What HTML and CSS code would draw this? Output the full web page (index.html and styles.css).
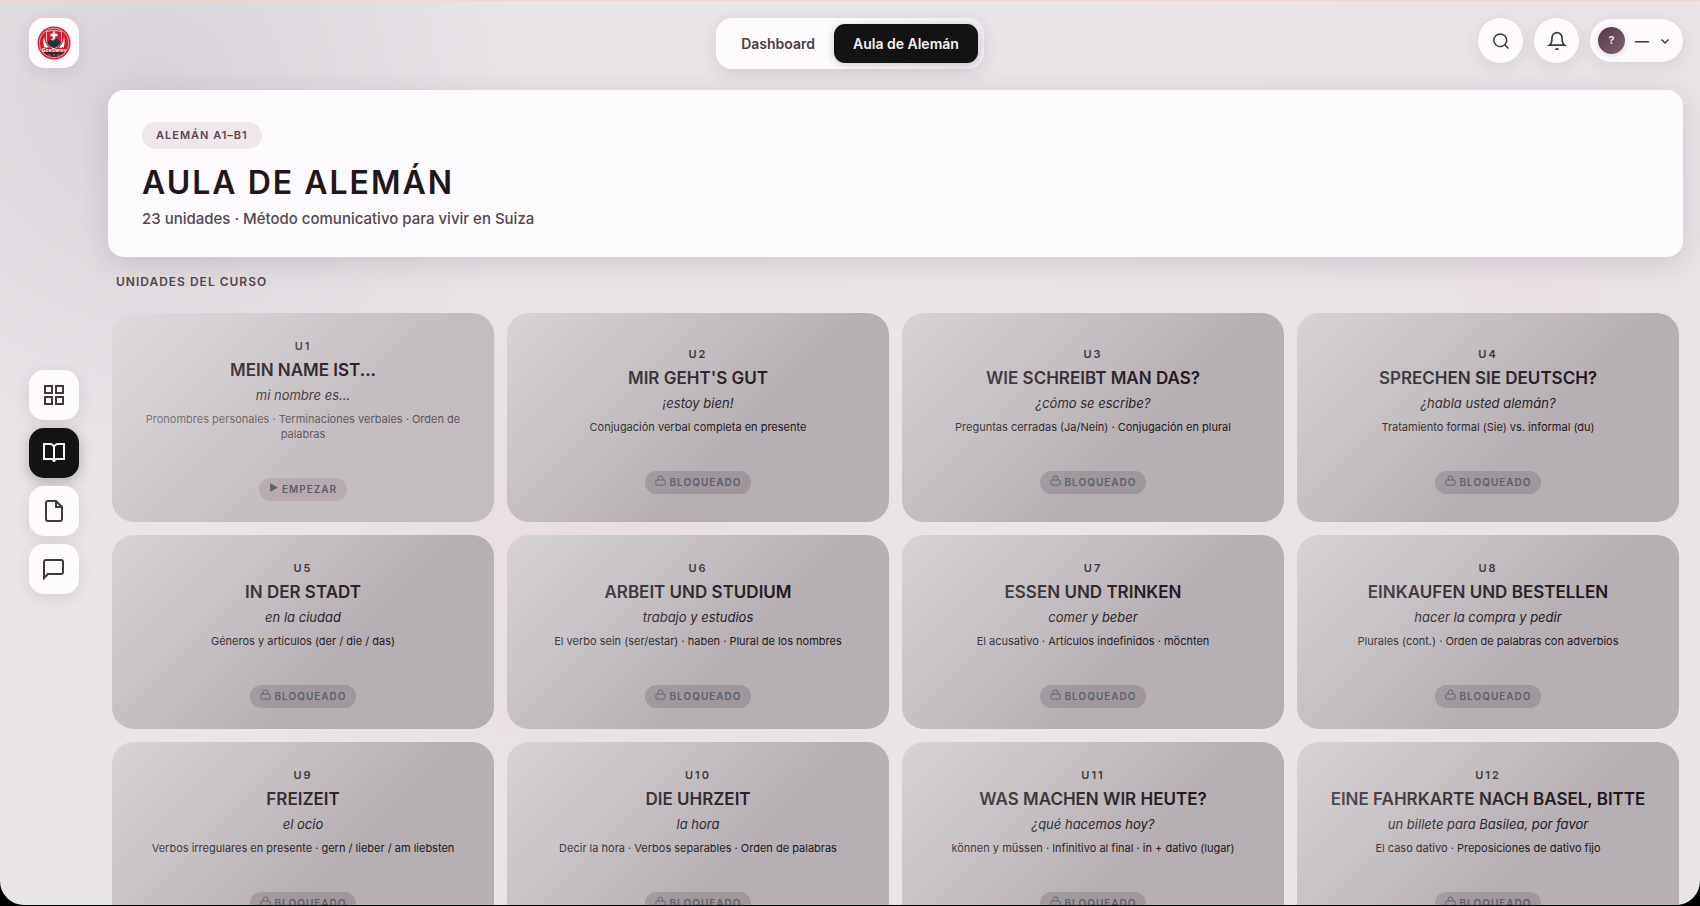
FILE: index.html
```html
<!DOCTYPE html>
<html lang="es">
<head>
    <meta charset="UTF-8">
    <meta name="viewport" content="width=device-width, initial-scale=1.0">
    <title>Aula de Alemán</title>
    <link rel="stylesheet" href="styles.css">
</head>
<body>
    <svg class="sprite" aria-hidden="true">
        <symbol id="lock" viewBox="0 0 24 24">
            <rect x="2" y="11" width="20" height="11" rx="2"/>
            <path d="M7 11V7a5 5 0 0 1 10 0v4"/>
        </symbol>
        <symbol id="play" viewBox="0 0 24 24">
            <path d="M4 2l18 10L4 22z"/>
        </symbol>
    </svg>

    <div class="app">
        <header class="topbar">
            <a class="tile logo" href="#" aria-label="Inicio">
                <svg width="34" height="34" viewBox="0 0 34 34">
                    <circle cx="17" cy="17" r="16.5" fill="#d5182a"/>
                    <circle cx="17" cy="17" r="14.8" fill="none" stroke="#f6c9cd" stroke-width=".8"/>
                    <path d="M5.6 24.5a13.5 13.5 0 0 0 22.8 0z" fill="#3a2530"/>
                    <path d="M7 11c1 5 2 8 5 10.500H7.500C6 18 6 14 7 11zM27 11c-1 5-2 8-5 10.500h4.500C28 18 28 14 27 11z" fill="#fff"/>
                    <path d="M9.500 5.500Q17 3 24.500 5.500V14q0 6-7.500 8.500Q9.500 20 9.500 14z" fill="#d5182a" stroke="#f8dfe1" stroke-width=".8"/>
                    <path d="M15.800 5.500h2.400v2.300h2.300v2.400h-2.300v2.300h-2.400v-2.300h-2.300V7.800h2.300z" fill="#fff"/>
                    <path d="M10 16l4-3 3-1.500 3 1.500 4 3q-1 4-7 6-6-2-7-6z" fill="#263540"/>
                    <path d="M13 14l4-2.500 2 1.300-2 .7-1 1.500-1-1.200z" fill="#dfe5e8"/>
                    <text x="17" y="26" class="logo-text">GoeSwiss</text>
                    <path d="M11 29h3M16 29h2M20 29h3" stroke="#a98d94" stroke-width=".8"/>
                </svg>
            </a>

            <nav class="tabs">
                <a href="#">Dashboard</a>
                <a class="active" href="#">Aula de Alemán</a>
            </nav>

            <div class="actions">
                <button class="round" aria-label="Buscar">
                    <svg class="icon" width="18" height="18" viewBox="0 0 24 24"><circle cx="11" cy="11" r="8.500"/><path d="M17.500 17.500L22 22"/></svg>
                </button>
                <button class="round" aria-label="Notificaciones">
                    <svg class="icon" width="20" height="20" viewBox="0 0 24 24"><path d="M18 8A6 6 0 0 0 6 8c0 7-3 9-3 9h18s-3-2-3-9"/><path d="M13.700 21a2 2 0 0 1-3.400 0"/></svg>
                </button>
                <button class="user" aria-label="Cuenta">
                    <span class="avatar">?</span>
                    <span class="user-name">—</span>
                    <svg class="icon" width="12" height="12" viewBox="0 0 24 24"><path d="M5 9l7 7 7-7"/></svg>
                </button>
            </div>
        </header>

        <aside class="sidebar">
            <a class="tile" href="#" aria-label="Dashboard">
                <svg class="icon" width="24" height="24" viewBox="0 0 24 24"><rect x="3" y="3" width="7" height="7"/><rect x="14" y="3" width="7" height="7"/><rect x="3" y="14" width="7" height="7"/><rect x="14" y="14" width="7" height="7"/></svg>
            </a>
            <a class="tile active" href="#" aria-label="Aula">
                <svg class="icon" width="24" height="24" viewBox="0 0 24 24"><path d="M2 3h6a4 4 0 0 1 4 4v14a3 3 0 0 0-3-3H2z"/><path d="M22 3h-6a4 4 0 0 0-4 4v14a3 3 0 0 1 3-3h7z"/></svg>
            </a>
            <a class="tile" href="#" aria-label="Documentos">
                <svg class="icon" width="24" height="24" viewBox="0 0 24 24"><path d="M14 2H6a2 2 0 0 0-2 2v16a2 2 0 0 0 2 2h12a2 2 0 0 0 2-2V8z"/><path d="M14 2v6h6"/></svg>
            </a>
            <a class="tile" href="#" aria-label="Mensajes">
                <svg class="icon" width="24" height="24" viewBox="0 0 24 24"><path d="M21 15a2 2 0 0 1-2 2H6l-4 4V5a2 2 0 0 1 2-2h15a2 2 0 0 1 2 2z"/></svg>
            </a>
        </aside>

        <main>
            <section class="hero">
                <span class="badge">ALEMÁN A1–B1</span>
                <h1>AULA DE ALEMÁN</h1>
                <p>23 unidades · Método comunicativo para vivir en Suiza</p>
            </section>

            <h2>UNIDADES DEL CURSO</h2>

            <div class="units">
                <article class="unit open">
                    <span class="num">U1</span>
                    <h3>MEIN NAME IST...</h3>
                    <em>mi nombre es...</em>
                    <p>Pronombres personales · Terminaciones verbales · Orden de palabras</p>
                    <button><svg><use href="#play"/></svg>EMPEZAR</button>
                </article>
                <article class="unit">
                    <span class="num">U2</span>
                    <h3>MIR GEHT'S GUT</h3>
                    <em>¡estoy bien!</em>
                    <p>Conjugación verbal completa en presente</p>
                    <button disabled><svg><use href="#lock"/></svg>BLOQUEADO</button>
                </article>
                <article class="unit">
                    <span class="num">U3</span>
                    <h3>WIE SCHREIBT MAN DAS?</h3>
                    <em>¿cómo se escribe?</em>
                    <p>Preguntas cerradas (Ja/Nein) · Conjugación en plural</p>
                    <button disabled><svg><use href="#lock"/></svg>BLOQUEADO</button>
                </article>
                <article class="unit">
                    <span class="num">U4</span>
                    <h3>SPRECHEN SIE DEUTSCH?</h3>
                    <em>¿habla usted alemán?</em>
                    <p>Tratamiento formal (Sie) vs. informal (du)</p>
                    <button disabled><svg><use href="#lock"/></svg>BLOQUEADO</button>
                </article>
                <article class="unit">
                    <span class="num">U5</span>
                    <h3>IN DER STADT</h3>
                    <em>en la ciudad</em>
                    <p>Géneros y artículos (der / die / das)</p>
                    <button disabled><svg><use href="#lock"/></svg>BLOQUEADO</button>
                </article>
                <article class="unit">
                    <span class="num">U6</span>
                    <h3>ARBEIT UND STUDIUM</h3>
                    <em>trabajo y estudios</em>
                    <p>El verbo sein (ser/estar) · haben · Plural de los nombres</p>
                    <button disabled><svg><use href="#lock"/></svg>BLOQUEADO</button>
                </article>
                <article class="unit">
                    <span class="num">U7</span>
                    <h3>ESSEN UND TRINKEN</h3>
                    <em>comer y beber</em>
                    <p>El acusativo · Artículos indefinidos · möchten</p>
                    <button disabled><svg><use href="#lock"/></svg>BLOQUEADO</button>
                </article>
                <article class="unit">
                    <span class="num">U8</span>
                    <h3>EINKAUFEN UND BESTELLEN</h3>
                    <em>hacer la compra y pedir</em>
                    <p>Plurales (cont.) · Orden de palabras con adverbios</p>
                    <button disabled><svg><use href="#lock"/></svg>BLOQUEADO</button>
                </article>
                <article class="unit">
                    <span class="num">U9</span>
                    <h3>FREIZEIT</h3>
                    <em>el ocio</em>
                    <p>Verbos irregulares en presente · gern / lieber / am liebsten</p>
                    <button disabled><svg><use href="#lock"/></svg>BLOQUEADO</button>
                </article>
                <article class="unit">
                    <span class="num">U10</span>
                    <h3>DIE UHRZEIT</h3>
                    <em>la hora</em>
                    <p>Decir la hora · Verbos separables · Orden de palabras</p>
                    <button disabled><svg><use href="#lock"/></svg>BLOQUEADO</button>
                </article>
                <article class="unit">
                    <span class="num">U11</span>
                    <h3>WAS MACHEN WIR HEUTE?</h3>
                    <em>¿qué hacemos hoy?</em>
                    <p>können y müssen · Infinitivo al final · in + dativo (lugar)</p>
                    <button disabled><svg><use href="#lock"/></svg>BLOQUEADO</button>
                </article>
                <article class="unit">
                    <span class="num">U12</span>
                    <h3>EINE FAHRKARTE NACH BASEL, BITTE</h3>
                    <em>un billete para Basilea, por favor</em>
                    <p>El caso dativo · Preposiciones de dativo fijo</p>
                    <button disabled><svg><use href="#lock"/></svg>BLOQUEADO</button>
                </article>
            </div>
        </main>
    </div>
</body>
</html>
```

FILE: styles.css
```css
* {
    margin: 0;
    padding: 0;
    box-sizing: border-box;
}

body {
    height: 100vh;
    padding-bottom: 1px;
    overflow: hidden;
    background-color: #000;
    color: #20161c;
    font-family: Inter, sans-serif;
}

a {
    color: inherit;
    text-decoration: none;
}

button {
    border: none;
    font-family: inherit;
    color: inherit;
    cursor: pointer;
}

.sprite {
    display: none;
}

.app {
    height: 100%;
    overflow: hidden;
    display: grid;
    grid-template-columns: 50px minmax(0, 1fr);
    grid-template-rows: auto minmax(0, 1fr);
    column-gap: 29px;
    padding: 17px 17px 0 29px;
    border-top: 1px solid #efd6cf;
    border-radius: 0 0 24px 24px;
    background:
        radial-gradient(circle at 9% 10%, rgba(205, 202, 207, 0.65), transparent 22%),
        radial-gradient(circle at 35% 60%, rgba(232, 216, 222, 0.6), transparent 30%),
        radial-gradient(circle at 90% 30%, rgba(232, 216, 222, 0.3), transparent 30%),
        #e9e4e8;
}

/* top bar */
.topbar {
    grid-column: 1 / 3;
    display: grid;
    grid-template-columns: 1fr auto 1fr;
    align-items: start;
    margin-left: -12px;
    height: 72px;
}

.tile {
    width: 50px;
    height: 50px;
    display: flex;
    align-items: center;
    justify-content: center;
    border-radius: 15px;
    background-color: #fdfbfe;
    color: #45363e;
    box-shadow: 0 4px 16px rgba(60, 40, 50, 0.1);
}

.tile.active {
    background-color: #131313;
    color: #f6f2f5;
    box-shadow: 0 4px 14px rgba(20, 10, 16, 0.25);
}

.logo {
    margin-left: 12px;
}

.logo-text {
    font-size: 5px;
    font-weight: 700;
    fill: #fff;
    text-anchor: middle;
}

.icon {
    fill: none;
    stroke: currentColor;
    stroke-width: 2;
}

.tabs {
    display: flex;
    padding: 6px;
    border-radius: 16px;
    background: linear-gradient(90deg, #fdfbfe 50%, #efebf0);
    box-shadow: 0 4px 18px rgba(60, 40, 50, 0.12);
}

.tabs a {
    padding: 0 19px;
    border-radius: 11px;
    color: #4a3b43;
    font-size: 14px;
    font-weight: 600;
    line-height: 39px;
}

.tabs .active {
    background-color: #131313;
    color: #f6f2f5;
    box-shadow: 0 2px 8px rgba(20, 10, 16, 0.2);
}

.actions {
    display: flex;
    align-items: center;
    justify-content: flex-end;
    gap: 11px;
}

.round,
.user {
    display: flex;
    align-items: center;
    justify-content: center;
    background-color: #fdfbfe;
    color: #45363e;
    box-shadow: 0 4px 16px rgba(60, 40, 50, 0.09);
}

.round {
    width: 45px;
    height: 45px;
    border-radius: 50%;
}

.user {
    height: 43px;
    gap: 10px;
    padding: 0 12px 0 8px;
    border-radius: 22px;
}

.user .icon {
    stroke-width: 3;
}

.user-name {
    font-size: 14px;
    font-weight: 600;
}

.avatar {
    width: 27px;
    height: 27px;
    border-radius: 50%;
    background: linear-gradient(135deg, #523a46, #806070);
    color: #f3e8ee;
    font-size: 11px;
    font-weight: 600;
    line-height: 27px;
    box-shadow: 0 1px 6px rgba(60, 40, 50, 0.2);
}

/* side menu */
.sidebar {
    display: flex;
    flex-direction: column;
    justify-content: center;
    gap: 8px;
    padding-bottom: 32px;
}

/* heading panel */
.hero {
    display: flex;
    flex-direction: column;
    align-items: flex-start;
    padding: 32px 34px 27px;
    border-radius: 16px;
    background-color: #fdfbfe;
    box-shadow: 0 6px 28px rgba(60, 40, 50, 0.14);
}

.badge {
    padding: 0 14px;
    border-radius: 14px;
    background-color: #eee7eb;
    color: #5c454f;
    font-size: 11px;
    font-weight: 600;
    letter-spacing: 1px;
    line-height: 27px;
}

h1 {
    margin-top: 13px;
    font-size: 32px;
    font-weight: 600;
    letter-spacing: 2px;
    line-height: 42px;
}

.hero p {
    margin-top: 4px;
    color: #54464e;
    font-size: 15px;
    font-weight: 500;
    line-height: 22px;
}

h2 {
    padding: 16px 8px 22px;
    color: #54444c;
    font-size: 12px;
    font-weight: 600;
    letter-spacing: 1px;
    line-height: 18px;
}

/* course units */
.units {
    display: grid;
    grid-template-columns: repeat(4, minmax(0, 1fr));
    gap: 13px;
    padding: 0 4px;
}

.unit {
    position: relative;
    display: flex;
    flex-direction: column;
    align-items: center;
    justify-content: center;
    padding: 24px 20px 21px;
    border-radius: 22px;
    background: linear-gradient(135deg, #c5c0c4, #b6afb3 60%);
    text-align: center;
}

/* pale sheen over the text */
.unit::after {
    content: "";
    position: absolute;
    inset: 0;
    border-radius: inherit;
    background: linear-gradient(135deg, rgba(255, 255, 255, 0.3), rgba(255, 255, 255, 0) 60%);
    pointer-events: none;
}

.unit.open {
    background: linear-gradient(135deg, #cfcace, #c3bcc0 60%);
}

.num {
    color: #2c2127;
    font-size: 11px;
    font-weight: 600;
    letter-spacing: 2px;
    line-height: 18px;
}

.unit h3 {
    margin-top: 3px;
    font-size: 17px;
    font-weight: 600;
    line-height: 24px;
}

.unit em {
    margin-top: 3px;
    font-size: 13px;
    line-height: 20px;
}

.unit p {
    margin-top: 7px;
    font-size: 11px;
    line-height: 15px;
}

.unit.open .num,
.unit.open em {
    color: #3c3137;
}

.unit.open p {
    color: #5f565b;
}

.unit button {
    display: flex;
    align-items: flex-start;
    gap: 4px;
    margin-top: 36px;
    padding: 0 10px;
    border-radius: 12px;
    background-color: #9f979c;
    color: #5b5e6c;
    font-size: 10px;
    font-weight: 600;
    letter-spacing: 1px;
    line-height: 23px;
}

.unit.open button {
    background-color: #b7abb0;
}

.unit button svg {
    width: 11px;
    height: 11px;
    margin-top: 4px;
    fill: none;
    stroke: currentColor;
    stroke-width: 2;
}

.unit.open button svg {
    width: 9px;
    fill: currentColor;
}
```
